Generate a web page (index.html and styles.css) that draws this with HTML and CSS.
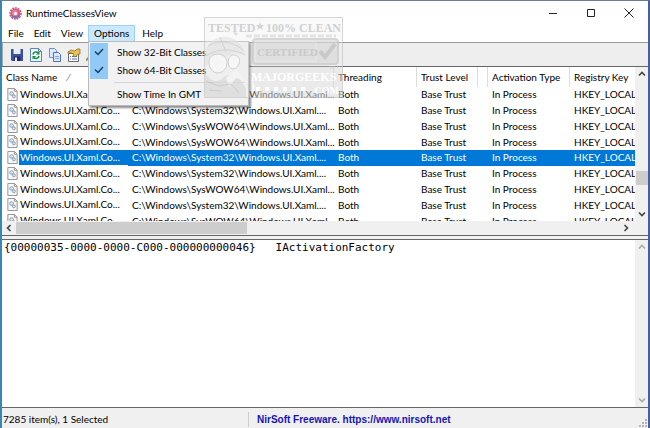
FILE: index.html
```html
<!DOCTYPE html>
<html lang="en">
<head>
  <meta charset="UTF-8">
  <meta name="viewport" content="width=device-width, initial-scale=1.0">
  <title>RuntimeClassesView</title>
  <link rel="stylesheet" href="styles.css">
</head>
<body>
  <svg class="defs" aria-hidden="true">
    <symbol id="doc" viewBox="0 0 11 14">
      <path class="doc-page" d="M.5.5h7l3 3v10H.5z"/>
      <path class="doc-fold" d="M7.5.5v3h3"/>
      <circle class="doc-gear" cx="4.5" cy="6" r="2"/>
      <circle class="doc-gear" cx="7" cy="9" r="1.6"/>
    </symbol>
    <symbol id="tick" viewBox="0 0 10 8">
      <path d="M1 3.5 4 6.5 9 1" fill="none" stroke="#1a3c60" stroke-width="1.4"/>
    </symbol>
    <symbol id="arrow" viewBox="0 0 8 8">
      <path d="M1 5.5 4 2.5 7 5.5" fill="none" stroke="currentColor" stroke-width="1.6"/>
    </symbol>
  </svg>

  <div class="window">
    <header class="title-bar">
      <svg class="app-icon" viewBox="0 0 14 14">
        <circle cx="7" cy="7" r="6" fill="none" stroke="#a8607c" stroke-width="1.6" stroke-dasharray="2 1"/>
        <circle cx="7" cy="7" r="5.4" fill="#e0577c"/>
        <path d="M2 9a5.4 5.4 0 0 0 8 2.5l2-4-3 1z" fill="#8b6cae"/>
        <circle cx="6.5" cy="6.5" r="3.2" fill="#f0839c"/>
        <circle cx="7" cy="7" r="1.7" fill="#fff"/>
      </svg>
      <h1>RuntimeClassesView</h1>
      <div class="window-buttons">
        <button type="button" aria-label="Minimize"><svg viewBox="0 0 10 10"><path d="M1 5.5h8"/></svg></button>
        <button type="button" aria-label="Maximize"><svg viewBox="0 0 10 10"><path d="M1.5 1.5h7v7h-7z"/></svg></button>
        <button type="button" aria-label="Close"><svg viewBox="0 0 10 10"><path d="m.5.5 9 9m0-9-9 9"/></svg></button>
      </div>
    </header>

    <nav class="menu-bar">
      <button type="button">File</button>
      <button type="button">Edit</button>
      <button type="button">View</button>
      <div class="menu-open">
        <button type="button">Options</button>
        <div class="menu">
          <label><input type="checkbox" checked><span class="check"><svg><use href="#tick"/></svg></span>Show 32-Bit Classes</label>
          <label><input type="checkbox" checked><span class="check"><svg><use href="#tick"/></svg></span>Show 64-Bit Classes</label>
          <hr>
          <label><input type="checkbox"><span class="check"></span>Show Time In GMT</label>
        </div>
      </div>
      <button type="button">Help</button>
    </nav>

    <div class="toolbar">
      <button type="button" aria-label="Save">
        <svg viewBox="0 0 14 14">
          <path d="M1 1h12v12H2l-1-1z" fill="#3b4fa5"/>
          <path d="M3.5 1h7v5h-7z" fill="#e8effb"/>
          <path d="M4 8.5h6.5V13H4z" fill="#222c63"/>
          <path d="M5 9.5h2V13H5z" fill="#e8effb"/>
        </svg>
      </button>
      <button type="button" aria-label="Refresh">
        <svg viewBox="0 0 14 14">
          <path d="M1.5.5h8l3 3v10h-11z" fill="#eef5ff" stroke="#5c83bb"/>
          <path d="M9.5.5v3h3" fill="none" stroke="#5c83bb"/>
          <path d="M4 6.5C4.5 3.5 8 3.5 9 5M10 8c-.5 3-4 3-5 1.5" fill="none" stroke="#15933b" stroke-width="1.6"/>
          <path d="M10.5 3v3.5H7zM3.5 11.5V8H7z" fill="#15933b"/>
        </svg>
      </button>
      <button type="button" aria-label="Copy">
        <svg viewBox="0 0 14 14">
          <path d="M1.5.5h5l2 2v7h-7z" fill="#dce8fb" stroke="#6f8fcb"/>
          <path d="M5.5 4.5h5l2 2v7h-7z" fill="#dce8fb" stroke="#4f72b8"/>
          <path d="M7 8.5h4M7 10.5h4" stroke="#86a6dc"/>
        </svg>
      </button>
      <button type="button" aria-label="Properties">
        <svg viewBox="0 0 14 14">
          <path d="M1.5 5.5h10v8h-10z" fill="#fff" stroke="#6b6b6b"/>
          <path d="M3 8.5h1m1 0h5M3 11h1m1 0h5" stroke="#4a6fb5"/>
          <path d="m1 4 3-2 4 1 2-2h3v5l-3 1-2 2-2-1 1-2-3-1H1z" fill="#e9c051" stroke="#856319" stroke-width=".7"/>
        </svg>
      </button>
      <button type="button" aria-label="Find">
        <svg viewBox="0 0 14 14">
          <path d="M0 12.5 5 7" stroke="#b28a3c" stroke-width="2"/>
          <circle cx="8" cy="5" r="3.5" fill="#dce8fb" stroke="#5c83bb"/>
        </svg>
      </button>
    </div>

    <section class="pane list-pane">
      <div class="list-body">
        <div class="list-view">
          <table>
            <colgroup>
              <col class="col-name"><col class="col-path"><col class="col-thread"><col class="col-trust"><col class="col-blank"><col class="col-type"><col>
            </colgroup>
            <thead>
              <tr><th>Class Name <span class="sort">⁄</span></th><th></th><th>Threading</th><th>Trust Level</th><th></th><th>Activation Type</th><th>Registry Key</th></tr>
            </thead>
            <tbody>
              <tr><td><svg><use href="#doc"/></svg><span>Windows.UI.Xaml.Co...</span></td><td>C:\Windows\SysWOW64\Windows.UI.Xaml...</td><td>Both</td><td>Base Trust</td><td></td><td>In Process</td><td>HKEY_LOCAL</td></tr>
              <tr><td><svg><use href="#doc"/></svg><span>Windows.UI.Xaml.Co...</span></td><td>C:\Windows\System32\Windows.UI.Xaml....</td><td>Both</td><td>Base Trust</td><td></td><td>In Process</td><td>HKEY_LOCAL</td></tr>
              <tr><td><svg><use href="#doc"/></svg><span>Windows.UI.Xaml.Co...</span></td><td>C:\Windows\SysWOW64\Windows.UI.Xaml...</td><td>Both</td><td>Base Trust</td><td></td><td>In Process</td><td>HKEY_LOCAL</td></tr>
              <tr><td><svg><use href="#doc"/></svg><span>Windows.UI.Xaml.Co...</span></td><td>C:\Windows\SysWOW64\Windows.UI.Xaml...</td><td>Both</td><td>Base Trust</td><td></td><td>In Process</td><td>HKEY_LOCAL</td></tr>
              <tr class="selected"><td><svg><use href="#doc"/></svg><span>Windows.UI.Xaml.Co...</span></td><td>C:\Windows\System32\Windows.UI.Xaml....</td><td>Both</td><td>Base Trust</td><td></td><td>In Process</td><td>HKEY_LOCAL</td></tr>
              <tr><td><svg><use href="#doc"/></svg><span>Windows.UI.Xaml.Co...</span></td><td>C:\Windows\System32\Windows.UI.Xaml....</td><td>Both</td><td>Base Trust</td><td></td><td>In Process</td><td>HKEY_LOCAL</td></tr>
              <tr><td><svg><use href="#doc"/></svg><span>Windows.UI.Xaml.Co...</span></td><td>C:\Windows\SysWOW64\Windows.UI.Xaml...</td><td>Both</td><td>Base Trust</td><td></td><td>In Process</td><td>HKEY_LOCAL</td></tr>
              <tr><td><svg><use href="#doc"/></svg><span>Windows.UI.Xaml.Co...</span></td><td>C:\Windows\System32\Windows.UI.Xaml....</td><td>Both</td><td>Base Trust</td><td></td><td>In Process</td><td>HKEY_LOCAL</td></tr>
              <tr><td><svg><use href="#doc"/></svg><span>Windows.UI.Xaml.Co...</span></td><td>C:\Windows\SysWOW64\Windows.UI.Xaml...</td><td>Both</td><td>Base Trust</td><td></td><td>In Process</td><td>HKEY_LOCAL</td></tr>
            </tbody>
          </table>
        </div>
        <div class="scroll-y">
          <svg class="up"><use href="#arrow"/></svg>
          <div class="thumb"></div>
          <svg class="down"><use href="#arrow"/></svg>
        </div>
      </div>
      <div class="scroll-x">
        <svg class="left"><use href="#arrow"/></svg>
        <div class="thumb"></div>
        <svg class="right"><use href="#arrow"/></svg>
      </div>
    </section>

    <section class="pane detail-pane">
      <pre>{00000035-0000-0000-C000-000000000046}   IActivationFactory</pre>
      <div class="scroll-y disabled">
        <svg class="up"><use href="#arrow"/></svg>
        <svg class="down"><use href="#arrow"/></svg>
      </div>
    </section>

    <footer class="status-bar">
      <span class="count">7285 item(s), 1 Selected</span>
      <a href="https://www.nirsoft.net">NirSoft Freeware. https://www.nirsoft.net</a>
      <svg class="grip" viewBox="0 0 8 8"><path d="M6 0h2v2H6zM3 3h2v2H3zM6 3h2v2H6zM0 6h2v2H0zM3 6h2v2H3zM6 6h2v2H6z" fill="#b5b5b5"/></svg>
    </footer>

    <svg class="stamp" viewBox="0 0 139 81">
      <path d="M.5.5h138v80H.5z" fill="#ececec" fill-opacity=".4" stroke="#c4c4c4"/>
      <g class="stamp-face">
        <path d="M1 35C4 25 13 18 24 20c10 2 15 9 18 18l-11-2-14 6L1 49z" fill="#e3e3e3"/>
        <path d="M4 29c8-5 22-7 35 4M2 39c12-8 26-8 39-1M16 20l6 15" fill="none" stroke="#c6c6c6"/>
        <path d="M9 38c8-3 15 2 14 9s-8 11-13 8-8-13-1-17zM28 38c6-1 9 4 7 9s-8 7-10 2 0-10 3-11z" fill="#f8f8f8" stroke="#c0c0c0"/>
        <path d="M1 55c5 11 14 11 19 5l12-5 10 17v8H1z" fill="#d8d8d8"/>
        <path d="m22 61 10-9 9 12-9-3-7 9z" fill="#f4f4f4"/>
        <path d="m2 64 13 5 12-2 8 9M5 73l12 1" fill="none" stroke="#bbb"/>
      </g>
      <path d="M42 19h90M30 15l3 3m92 33h9" stroke="#d8d8d8" stroke-width="3" stroke-dasharray="6 2"/>
      <rect x="49" y="22" width="85" height="25" rx="3" fill="#d9d9d9" stroke="#c6c6c6" stroke-width="2"/>
      <path d="M51 25h61v19H51z" fill="none" stroke="#e9e9e9"/>
      <path d="m116 34 5 6 10-13" fill="none" stroke="#bababa" stroke-width="4"/>
      <path d="M47 50h91v30H52z" fill="#d9d9d9" fill-opacity=".7"/>
      <text class="stamp-top" x="4" y="15">TESTED</text>
      <path d="m56 5 1 3h3l-2 2 1 3-3-2-3 2 1-3-2-2h3z" fill="#c2c2c2"/>
      <text class="stamp-top" x="62" y="15">100% CLEAN</text>
      <text class="stamp-mid" x="53" y="39">CERTIFIED</text>
      <text class="stamp-name" x="47" y="64">MAJORGEEKS</text>
      <path d="M52 72h54" stroke="#fff" stroke-width="4" stroke-dasharray="4 5"/>
      <text class="stamp-com" x="108" y="77">.COM</text>
    </svg>
  </div>
</body>
</html>
```

FILE: styles.css
```css
* {
  box-sizing: border-box;
}
body {
  margin: 0;
  font-family: Lato, "Open Sans", sans-serif;
  font-size: 10px;
  line-height: 15px;
  color: #000;
}
button {
  margin: 0;
  padding: 0;
  border: none;
  background: none;
  font: inherit;
  color: inherit;
}
svg {
  display: block;
}
.defs {
  position: absolute;
  width: 0;
  height: 0;
}
.window {
  position: relative;
  display: flex;
  flex-direction: column;
  height: 100vh;
  border-top: 1px solid #6b7b90;
  border-left: 2px solid #3988b3;
  border-right: 2px solid #4361a0;
  background: #f0f0f0;
  overflow: hidden;
}

/* title bar */
.title-bar {
  display: flex;
  align-items: center;
  flex: none;
  height: 24px;
  padding-left: 7px;
  background: #fff;
}
.app-icon {
  width: 13px;
  height: 13px;
}
.title-bar h1 {
  flex: 1;
  margin: 0 0 0 4px;
  font-size: 10px;
  font-weight: normal;
}
.window-buttons {
  display: flex;
}
.window-buttons button {
  width: 38px;
  height: 24px;
  padding: 0 14px;
}
.window-buttons svg {
  width: 10px;
  height: 10px;
  fill: none;
  stroke: #222;
}

/* menu bar */
.menu-bar {
  display: flex;
  flex: none;
  height: 18px;
  padding-left: 1px;
  border-bottom: 1px solid #999;
  background: #fff;
}
.menu-bar button {
  display: block;
  height: 17px;
  padding: 0 5px;
  line-height: 15px;
}
.menu-open {
  position: relative;
  margin-right: 2px;
}
.menu-open > button {
  border: 1px solid #99d1ff;
  background: #cce8ff;
}
.menu {
  position: absolute;
  top: 16px;
  left: 0;
  z-index: 2;
  width: 161px;
  padding: 1px 1px 2px;
  border: 1px solid #bbb;
  background: #f2f2f2;
  box-shadow: 2px 2px 2px rgba(0, 0, 0, 0.45);
}
.menu label {
  display: flex;
  align-items: center;
  height: 18px;
}
.menu input {
  appearance: none;
  width: 0;
  height: 0;
  margin: 0;
}
.check {
  display: grid;
  place-items: center;
  width: 18px;
  height: 18px;
  margin-right: 9px;
}
.check svg {
  width: 10px;
  height: 8px;
}
.menu input:checked + .check {
  background: #91c9f7;
}
.menu hr {
  margin: 3px 2px 2px 24px;
  border: none;
  border-top: 1px solid #d5d5d5;
}

/* toolbar */
.toolbar {
  display: flex;
  align-items: center;
  gap: 5px;
  flex: none;
  height: 23px;
  padding-left: 7px;
  border-left: 1px solid #aaa;
  background: #eee;
}
.toolbar svg {
  width: 14px;
  height: 14px;
}

/* list */
.pane {
  flex: 1 1 0;
  min-height: 0;
  border-top: 1px solid #666;
  border-bottom: 1px solid #666;
  background: #fff;
}
.list-pane {
  display: flex;
  flex-direction: column;
  margin-bottom: 3px;
}
.list-body {
  display: flex;
  flex: 1;
  min-height: 0;
}
.list-view {
  flex: 1;
  min-width: 0;
  overflow: hidden;
}
table {
  width: 100%;
  height: 162px;
  table-layout: fixed;
  border-collapse: separate;
  border-spacing: 0;
}
.col-name { width: 126px; }
.col-path { width: 206px; }
.col-thread { width: 83px; }
.col-trust { width: 61px; }
.col-blank { width: 10px; }
.col-type { width: 82px; }
th,
td {
  padding: 0 0 0 4px;
  font-weight: normal;
  text-align: left;
  white-space: nowrap;
}
th {
  height: 20px;
  border-right: 1px solid #ddd;
}
th:last-child {
  border-right: none;
}
.sort {
  margin-left: 8px;
  color: #777;
}
td:first-child {
  display: flex;
  align-items: center;
  padding-left: 5px;
}
td svg {
  flex: none;
  width: 11px;
  height: 13px;
  margin-right: 1px;
}
td span {
  flex: 1;
  padding-left: 1px;
}
.selected td {
  background: #0078d7;
  color: #fff;
}
.selected td:first-child {
  background: none;
}
.selected td span {
  background: #0078d7;
}
.doc-page {
  fill: #fafafa;
  stroke: #8d8d8d;
}
.doc-fold {
  fill: none;
  stroke: #8d8d8d;
}
.doc-gear {
  fill: #dce5ec;
  stroke: #8799a8;
}
.selected .doc-page {
  fill: #65aee8;
  stroke: #3b7fbd;
}
.selected .doc-gear {
  fill: #8dc3ee;
  stroke: #2f73b3;
}

/* scroll bars */
.scroll-y,
.scroll-x {
  display: flex;
  flex: none;
  align-items: center;
  background: #f0f0f0;
  color: #444;
}
.scroll-y {
  flex-direction: column;
  justify-content: space-between;
  width: 13px;
  padding: 3px 0;
}
.scroll-x {
  height: 14px;
  padding: 0 18px 0 3px;
}
.scroll-y svg,
.scroll-x svg {
  width: 8px;
  height: 8px;
}
.thumb {
  background: #cdcdcd;
}
.scroll-y .thumb {
  width: 12px;
  height: 14px;
  margin-top: 68px;
}
.scroll-x .thumb {
  width: 37%;
  height: 12px;
  margin: 0 auto 0 3px;
}
.down {
  transform: rotate(180deg);
}
.left {
  transform: rotate(-90deg);
}
.right {
  transform: rotate(90deg);
}
.disabled {
  color: #aaa;
}

/* details */
.detail-pane {
  display: flex;
}
.detail-pane pre {
  flex: 1;
  margin: 0;
  padding: 0 2px;
  font-family: "DejaVu Sans Mono", "Liberation Mono", monospace;
  font-size: 11px;
}

/* status bar */
.status-bar {
  display: flex;
  align-items: center;
  flex: none;
  height: 20px;
  padding-top: 2px;
}
.count {
  width: 247px;
  padding-left: 1px;
  border-right: 1px solid #ccc;
}
.status-bar a {
  flex: 1;
  padding-left: 8px;
  font-family: "Liberation Sans", Arial, sans-serif;
  font-size: 10px;
  font-weight: bold;
  color: #1515b5;
  text-decoration: none;
}
.grip {
  align-self: flex-end;
  width: 8px;
  height: 8px;
  margin: 0 1px 1px 0;
}

/* stamp over the window */
.stamp {
  position: absolute;
  top: 16px;
  left: 202px;
  z-index: 3;
  width: 139px;
  height: 81px;
  opacity: 0.7;
  pointer-events: none;
}
.stamp text {
  font-family: "Liberation Serif", serif;
  font-weight: bold;
}
.stamp-top {
  font-size: 12px;
  fill: #bdbdbd;
}
.stamp-mid {
  font-size: 11px;
  fill: #b9b9b9;
}
.stamp-name {
  font-size: 12px;
  fill: #fff;
}
.stamp-com {
  font-size: 10px;
  fill: #fff;
}
```
